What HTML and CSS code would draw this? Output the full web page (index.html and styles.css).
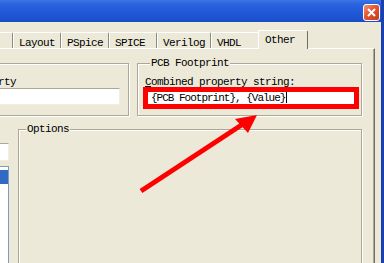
FILE: index.html
```html
<!DOCTYPE html>
<html lang="en">
  <head>
    <meta charset="UTF-8" />
    <meta name="viewport" content="width=device-width, initial-scale=1.0" />
    <title>Part Properties</title>
    <link rel="stylesheet" href="styles.css">
  </head>
  <body>
    <div class="window">
      <div class="titlebar">
        <span class="close">
          <svg width="17" height="17" viewBox="0 0 17 17">
            <defs>
              <linearGradient id="closeFill" x1="0" y1="0" x2="1" y2="1">
                <stop offset="0" stop-color="#f39a7c" />
                <stop offset="0.45" stop-color="#e2552f" />
                <stop offset="1" stop-color="#c2391c" />
              </linearGradient>
            </defs>
            <rect x="0.5" y="0.5" width="16" height="16" rx="2.5" fill="url(#closeFill)" stroke="#fff" />
            <path d="M5 5 L12 12 M12 5 L5 12" stroke="#fff" stroke-width="2" />
          </svg>
        </span>
      </div>

      <div class="tabctrl">
        <div class="tabs">
          <div class="tab tab-cut"></div>
          <div class="tab">Layout</div>
          <div class="tab">PSpice</div>
          <div class="tab">SPICE</div>
          <div class="tab tab-wide">Verilog</div>
          <div class="tab tab-vhdl">VHDL</div>
          <div class="tab active">Other</div>
        </div>

        <div class="panel">
          <div class="row row-top">
            <div class="group group-part">
              <span class="label label-part">Property</span>
              <div class="edit"></div>
            </div>
            <div class="group group-pcb">
              <span class="legend">PCB Footprint</span>
              <span class="label"><u>C</u>ombined property string:</span>
              <div class="mark">
                <div class="field">{PCB Footprint}, {Value}<span class="caret"></span></div>
              </div>
            </div>
          </div>

          <div class="row row-bottom">
            <div class="side">
              <div class="edit edit-side"></div>
              <div class="list">
                <div class="item selected"></div>
              </div>
            </div>
            <div class="group group-options">
              <span class="legend">Options</span>
            </div>
          </div>
        </div>
      </div>
    </div>

    <svg class="arrow" width="384" height="263" viewBox="0 0 384 263">
      <line x1="141" y1="191" x2="243" y2="124" stroke="#f00" stroke-width="5" />
      <polygon points="257,115 235,119 248,133" fill="#f00" />
    </svg>
  </body>
</html>
```

FILE: styles.css
```css
body {
  margin: 0;
  width: 384px;
  height: 263px;
  overflow: hidden;
  background-color: #ece9d8;
  font-family: "Liberation Mono", monospace;
  font-size: 11px;
  letter-spacing: -0.6px;
  color: #000;
  position: relative;
}
.window {
  height: 263px;
  border-right: 3px solid #1a3fae;
  display: flex;
  flex-direction: column;
}
.titlebar {
  height: 22px;
  flex-shrink: 0;
  display: flex;
  justify-content: flex-end;
  align-items: flex-start;
  padding: 4px 1px 0 0;
  box-sizing: border-box;
  background: linear-gradient(#3b77e8 0%, #2a64de 18%, #2159d8 55%, #1c52cf 85%, #1a4cc4 100%);
}
.close {
  display: block;
  width: 17px;
  height: 17px;
}
.close svg {
  display: block;
}
.tabctrl {
  margin: 0 6px 0 -60px;
  display: flex;
  flex-direction: column;
  flex: 1;
}
.tabs {
  height: 26px;
  display: flex;
  align-items: flex-end;
}
.tab {
  width: 48px;
  height: 16px;
  box-sizing: border-box;
  padding: 4px 0 0 5px;
  line-height: 13px;
  white-space: nowrap;
  overflow: hidden;
  border-top: 1px solid #fff;
  border-left: 1px solid #fff;
  border-right: 1px solid #8e8c80;
  border-radius: 2px 2px 0 0;
}
.tab-cut {
  width: 73px;
}
.tab-wide {
  width: 54px;
}
.tab-vhdl {
  width: 49px;
}
.tab.active {
  width: 50px;
  height: 19px;
  margin: 0 0 -1px -2px;
  padding: 3px 0 0 6px;
  background-color: #ece9d8;
  border-right-color: #716f64;
  position: relative;
  z-index: 1;
}
.panel {
  flex: 1;
  border-top: 1px solid #fff;
  border-left: 1px solid #fff;
  border-right: 1px solid #716f64;
  box-shadow: inset -1px 0 #aca899;
  padding: 14px 11px 0 9px;
  display: flex;
  flex-direction: column;
}
.row {
  display: flex;
}
.row-top {
  gap: 8px;
  height: 53px;
}
.row-bottom {
  gap: 9px;
  margin-top: 13px;
  flex: 1;
}
.group {
  border: 1px solid #aca899;
  box-shadow: inset 1px 1px #fff, 1px 1px #fff;
  display: flex;
  flex-direction: column;
  align-items: flex-start;
  box-sizing: border-box;
}
.legend {
  margin: -7px 0 0 7px;
  padding: 0 1px;
  line-height: 13px;
  height: 13px;
  background-color: #ece9d8;
}
.label {
  margin: 7px 0 0 7px;
  line-height: 10px;
  height: 10px;
  white-space: nowrap;
}
.group-part {
  width: 179px;
}
.label-part {
  margin-top: 13px;
  align-self: flex-end;
  margin-right: 112px;
}
.edit {
  background-color: #fff;
  border: 1px solid;
  border-color: #aca899 #f1efe2 #f1efe2 #aca899;
  box-sizing: border-box;
}
.group-part .edit {
  margin-top: 1px;
  align-self: stretch;
  margin-right: 8px;
  margin-left: 8px;
  height: 17px;
}
.group-pcb {
  width: 225px;
  padding-left: 5px;
}
.group-pcb .label {
  margin-left: 2px;
}
.mark {
  width: 216px;
  height: 22px;
  box-sizing: border-box;
  border: 5px solid #f00;
  background-color: #fff;
}
.field {
  padding-left: 3px;
  line-height: 12px;
  height: 12px;
  letter-spacing: -1px;
  white-space: nowrap;
}
.caret {
  display: inline-block;
  width: 1px;
  height: 11px;
  margin-left: 1px;
  background-color: #000;
  vertical-align: -2px;
}
.side {
  width: 59px;
  flex-shrink: 0;
  display: flex;
  flex-direction: column;
}
.edit-side {
  margin-top: 14px;
  height: 18px;
}
.list {
  margin-top: 5px;
  flex: 1;
  background-color: #fff;
  border: 1px solid #7f9db9;
  padding-top: 3px;
}
.item {
  height: 14px;
}
.item.selected {
  background-color: #316ac5;
}
.group-options {
  width: 344px;
  height: 200px;
}
.arrow {
  position: absolute;
  top: 0;
  left: 0;
  pointer-events: none;
}
```
